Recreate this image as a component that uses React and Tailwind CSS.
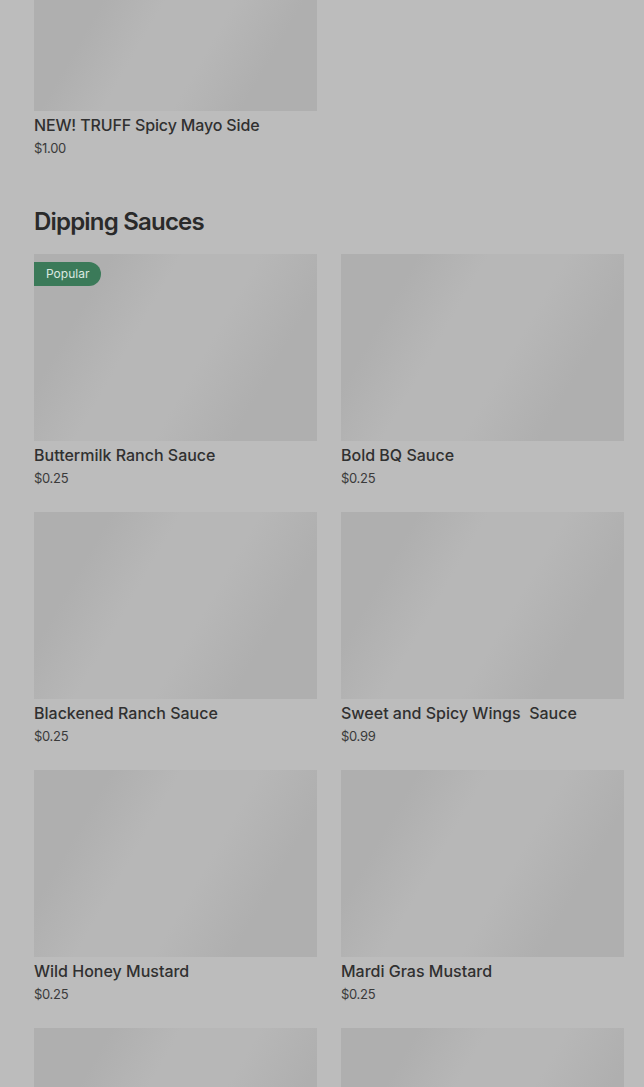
import React from "react";

const items = [
  { name: "Buttermilk Ranch Sauce", price: "$0.25", popular: true },
  { name: "Bold BQ Sauce", price: "$0.25" },
  { name: "Blackened Ranch Sauce", price: "$0.25" },
  { name: "Sweet and Spicy Wings  Sauce", price: "$0.99" },
  { name: "Wild Honey Mustard", price: "$0.25" },
  { name: "Mardi Gras Mustard", price: "$0.25" },
  { name: "", price: "" },
  { name: "", price: "" },
];

function Shimmer({ className }) {
  return (
    <div
      className={
        "w-full bg-[linear-gradient(120deg,#afafaf_20%,#b7b7b7_38%,#b7b7b7_58%,#afafaf_78%)] " +
        className
      }
    />
  );
}

function Card({ name, price, popular }) {
  return (
    <div className="flex flex-col">
      <div className="relative">
        <Shimmer className="h-[187px]" />
        {popular && (
          <div className="absolute left-0 top-[8px] h-[24px] pl-[12px] pr-[12px] rounded-r-full bg-[#3b7a59] text-[#dbe9e0] text-[12px] leading-[24px] font-['Inter',sans-serif]">
            Popular
          </div>
        )}
      </div>
      {name && (
        <>
          <div className="mt-[4px] text-[16px] leading-[20px] font-medium text-[#303030] whitespace-pre">{name}</div>
          <div className="mt-[4px] text-[13px] leading-[18px] text-[#3a3a3a] tracking-[-0.3px]">{price}</div>
        </>
      )}
    </div>
  );
}

export default function App() {
  return (
    <div className="w-[644px] h-[1087px] overflow-hidden bg-[#bcbcbc] font-['Inter',sans-serif]">
      <div className="pl-[34px] pr-[20px]">
        <div className="w-[283px] flex flex-col">
          <Shimmer className="h-[111px]" />
          <div className="mt-[4px] text-[16px] leading-[20px] font-medium tracking-[-0.15px] text-[#303030]">NEW! TRUFF Spicy Mayo Side</div>
          <div className="mt-[4px] text-[13px] leading-[18px] text-[#3a3a3a] tracking-[-0.3px]">$1.00</div>
        </div>
        <h2 className="mt-[49px] text-[24px] leading-[32px] font-semibold tracking-[-0.8px] text-[#2a2a2a]">Dipping Sauces</h2>
        <div className="mt-[16px] grid grid-cols-2 gap-x-[24px] gap-y-[25px]">
          {items.map((it, i) => (
            <Card key={i} {...it} />
          ))}
        </div>
      </div>
    </div>
  );
}
